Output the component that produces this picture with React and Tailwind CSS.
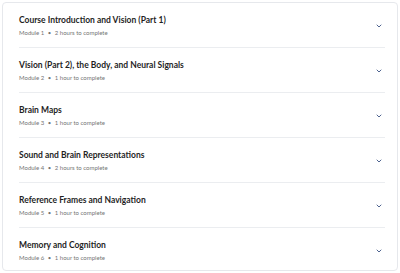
import { ChevronDown } from "lucide-react";

const modules = [
  { title: "Course Introduction and Vision (Part 1)", n: 1, time: "2 hours to complete" },
  { title: "Vision (Part 2), the Body, and Neural Signals", n: 2, time: "1 hour to complete" },
  { title: "Brain Maps", n: 3, time: "1 hour to complete" },
  { title: "Sound and Brain Representations", n: 4, time: "2 hours to complete" },
  { title: "Reference Frames and Navigation", n: 5, time: "1 hour to complete" },
  { title: "Memory and Cognition", n: 6, time: "1 hour to complete" },
];

export default function App() {
  return (
    <div
      className="w-[400px] h-[273px] bg-white p-[2px]"
      style={{ fontFamily: "Lato, 'Open Sans', sans-serif" }}
    >
      <div className="h-[269px] border border-[#e6e8ec] rounded-[4px] bg-white pl-4 pr-3">
        {modules.map((m, i) => (
          <div
            key={m.n}
            className={`flex items-center justify-between pt-[11px] pb-[9px] ${
              i < modules.length - 1 ? "border-b border-[#ebedf0]" : ""
            }`}
          >
            <div className="flex flex-col gap-[2px]">
              <h3 className="text-[8.5px] leading-[12px] font-bold text-[#1f1f1f]">
                {m.title}
              </h3>
              <p className="text-[6px] leading-[10px] text-[#757575]">
                Module {m.n} <span className="mx-[2px]">•</span> {m.time}
              </p>
            </div>
            <ChevronDown className="w-[8px] h-[8px] text-[#4f6490] mr-[2px]" strokeWidth={3} />
          </div>
        ))}
      </div>
    </div>
  );
}
